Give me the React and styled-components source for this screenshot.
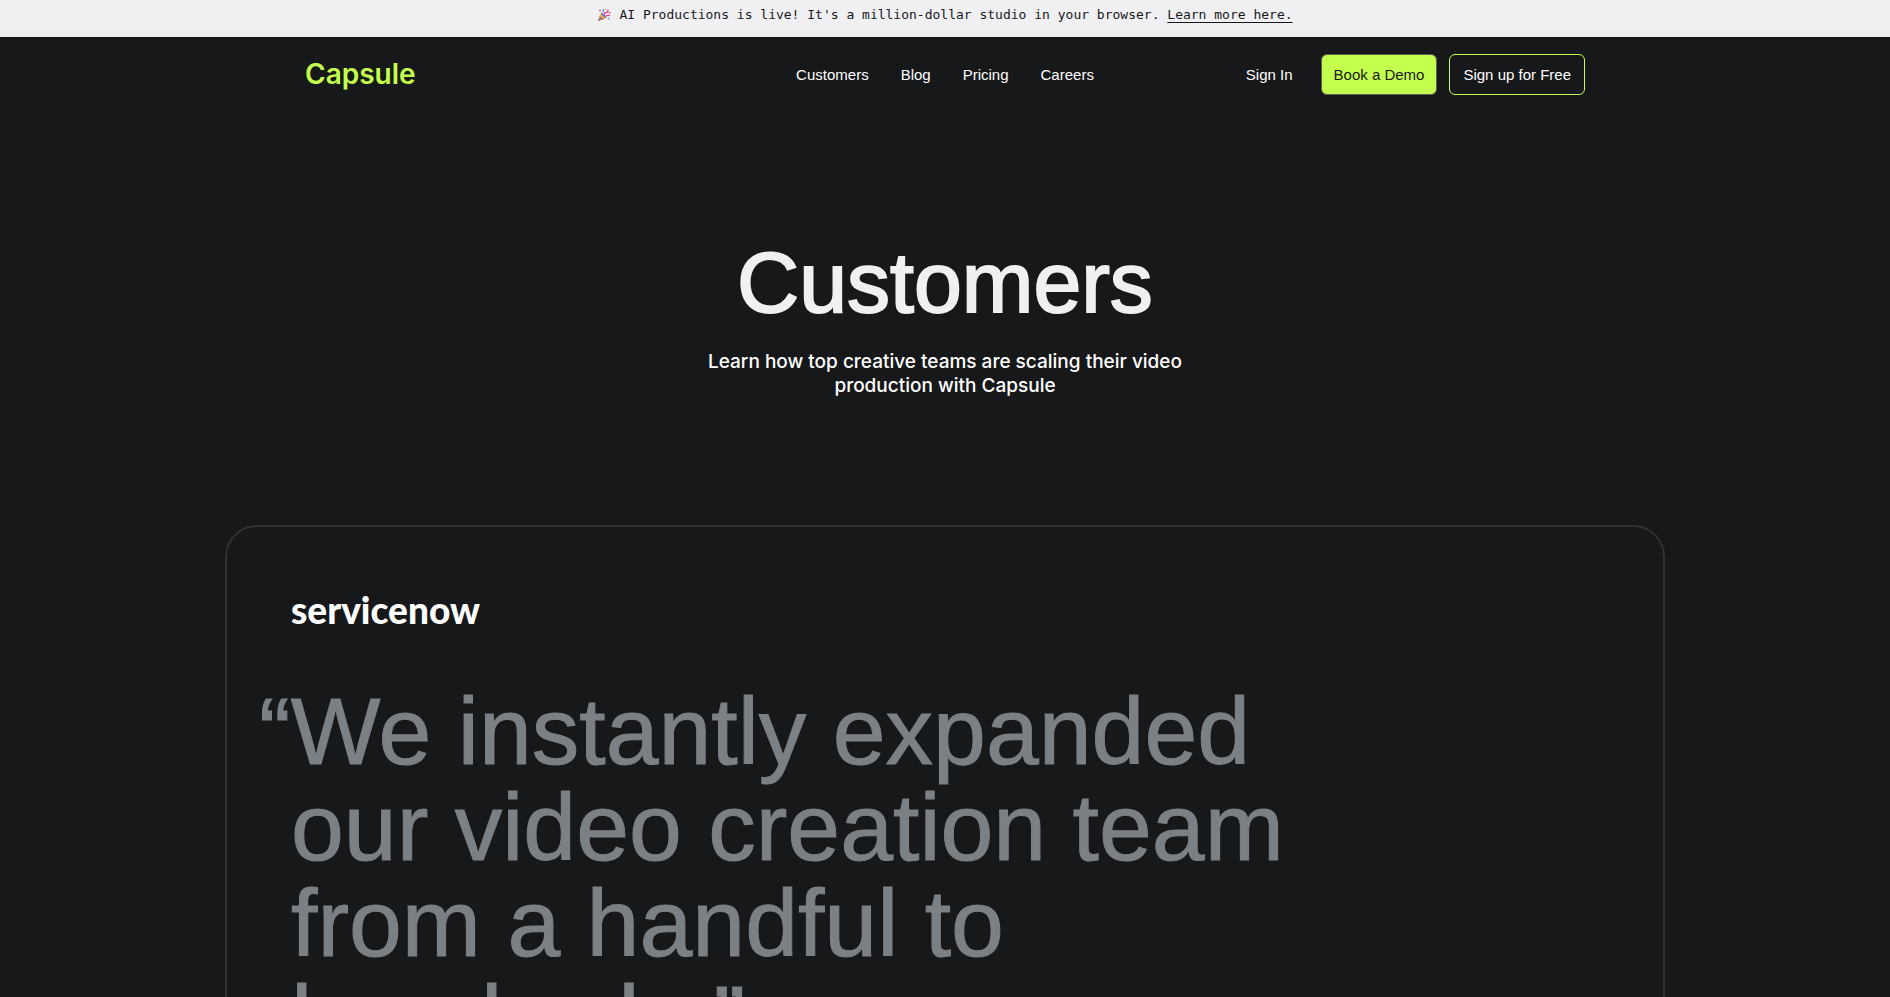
import React from "react";
import styled, { createGlobalStyle } from "styled-components";

const sans = `"Liberation Sans", Arial, Helvetica, sans-serif`;
const grotesk = `Inter, "Liberation Sans", Arial, sans-serif`;
const mono = `"DejaVu Sans Mono", "Liberation Mono", monospace`;

const GlobalStyle = createGlobalStyle`
  *, *::before, *::after { box-sizing: border-box; }
  body {
    margin: 0;
    background: #17181a;
    color: #ffffff;
    font-family: ${sans};
  }
  h1, p, blockquote { margin: 0; }
  a { color: inherit; text-decoration: none; }
`;

const Banner = styled.aside`
  display: flex;
  justify-content: center;
  align-items: center;
  gap: 8px;
  padding: 4px 16px 12px;
  background: #f0f0f3;
  color: #17181a;
  font-family: ${mono};
  font-size: 13px;
  line-height: 21px;
`;

const BannerLink = styled.a`
  text-decoration: underline;
  text-underline-offset: 3px;
`;

const Header = styled.header`
  display: grid;
  grid-template-columns: 1fr auto 1fr;
  align-items: center;
  max-width: 1280px;
  margin: 0 auto;
  padding: 17px 0 16px;
`;

const Logo = styled.a`
  justify-self: start;
  color: #c4ff4d;
  font-family: ${grotesk};
  font-size: 28px;
  font-weight: 600;
  line-height: 34px;
  padding-bottom: 2px;
`;

const Nav = styled.nav`
  display: flex;
  gap: 32px;
  font-size: 15px;
  line-height: 20px;
`;

const Actions = styled.div`
  display: flex;
  justify-self: end;
  align-items: center;
  gap: 12px;
  font-size: 15px;
  line-height: 20px;
`;

const SignIn = styled.a`
  margin-right: 16px;
`;

const Button = styled.button`
  height: 41px;
  padding: 0 ${(p) => (p.$filled ? 12 : 13)}px;
  border: 1px solid ${(p) => (p.$filled ? "#5b5f55" : "#c4ff4d")};
  border-radius: 6px;
  background: ${(p) => (p.$filled ? "#c4ff4d" : "transparent")};
  color: ${(p) => (p.$filled ? "#17181a" : "#ffffff")};
  font: inherit;
  cursor: pointer;
`;

const Hero = styled.section`
  display: flex;
  flex-direction: column;
  align-items: center;
  gap: 20px;
  padding: 123px 24px 127px;
  text-align: center;
`;

const Title = styled.h1`
  color: #f0f0f3;
  font-size: 86px;
  font-weight: 400;
  line-height: 96px;
  -webkit-text-stroke: 2px #f0f0f3;
`;

const Lead = styled.p`
  max-width: 500px;
  font-family: ${grotesk};
  font-size: 19px;
  font-weight: 500;
  line-height: 24px;
`;

const Card = styled.article`
  max-width: 1440px;
  margin: 0 auto 64px;
  padding: 64px;
  border: 2px solid #2f3133;
  border-radius: 32px;
`;

const Brand = styled.div`
  font-family: Lato, sans-serif;
  font-size: 37px;
  font-weight: 900;
  line-height: 38px;
`;

const Quote = styled.blockquote`
  max-width: 1100px;
  margin-top: 54px;
  color: #7b8085;
  font-size: 95px;
  line-height: 96px;
  text-indent: -32px;
  -webkit-text-stroke: 1px #7b8085;
`;

function PartyPopper() {
  return (
    <svg width="14" height="14" viewBox="0 0 14 14" aria-hidden="true">
      <path d="M1 13 4 4.500 9.500 10z" fill="#f5a83b" />
      <path d="M1 13 1.800 10.600 3.600 12.200zM2.600 8.500 6.600 11.200 5 11.900 2.100 9.800z" fill="#6c5a9c" />
      <path d="M4 4.500c1.500 0 5.500 4 5.500 5.500-1.800.2-5.700-3.700-5.500-5.500z" fill="#4b7fc4" />
      <path d="M7 7c0-2 1-2.500 2.500-2.500S11 3 11 1.500M8.500 8.300c1-1 2.500-1.300 4.500-.6" fill="none" stroke="#e8489b" strokeWidth="1.300" />
      <path d="M5.500 4.200C7 3.500 6.500 2 6 1" fill="none" stroke="#4aa3e0" strokeWidth="1.300" />
      <circle cx="3" cy="2.500" r=".9" fill="#e8489b" />
      <circle cx="8.600" cy="1.600" r=".8" fill="#f5a83b" />
      <circle cx="12.600" cy="4.600" r=".9" fill="#f04a62" />
      <circle cx="11.600" cy="10.600" r=".9" fill="#4aa3e0" />
    </svg>
  );
}

const links = ["Customers", "Blog", "Pricing", "Careers"];

export default function App() {
  return (
    <>
      <GlobalStyle />
      <Banner>
        <PartyPopper />
        <span>
          AI Productions is live! It's a million-dollar studio in your browser.{" "}
          <BannerLink href="#productions">Learn more here.</BannerLink>
        </span>
      </Banner>
      <Header>
        <Logo href="#home">Capsule</Logo>
        <Nav aria-label="Main">
          {links.map((label) => (
            <a key={label} href={`#${label.toLowerCase()}`}>{label}</a>
          ))}
        </Nav>
        <Actions>
          <SignIn href="#sign-in">Sign In</SignIn>
          <Button type="button" $filled>Book a Demo</Button>
          <Button type="button">Sign up for Free</Button>
        </Actions>
      </Header>
      <main>
        <Hero>
          <Title>Customers</Title>
          <Lead>Learn how top creative teams are scaling their video production with Capsule</Lead>
        </Hero>
        <Card>
          <Brand>servicenow</Brand>
          <Quote>“We instantly expanded our video creation team from a handful to hundreds.”</Quote>
        </Card>
      </main>
    </>
  );
}
